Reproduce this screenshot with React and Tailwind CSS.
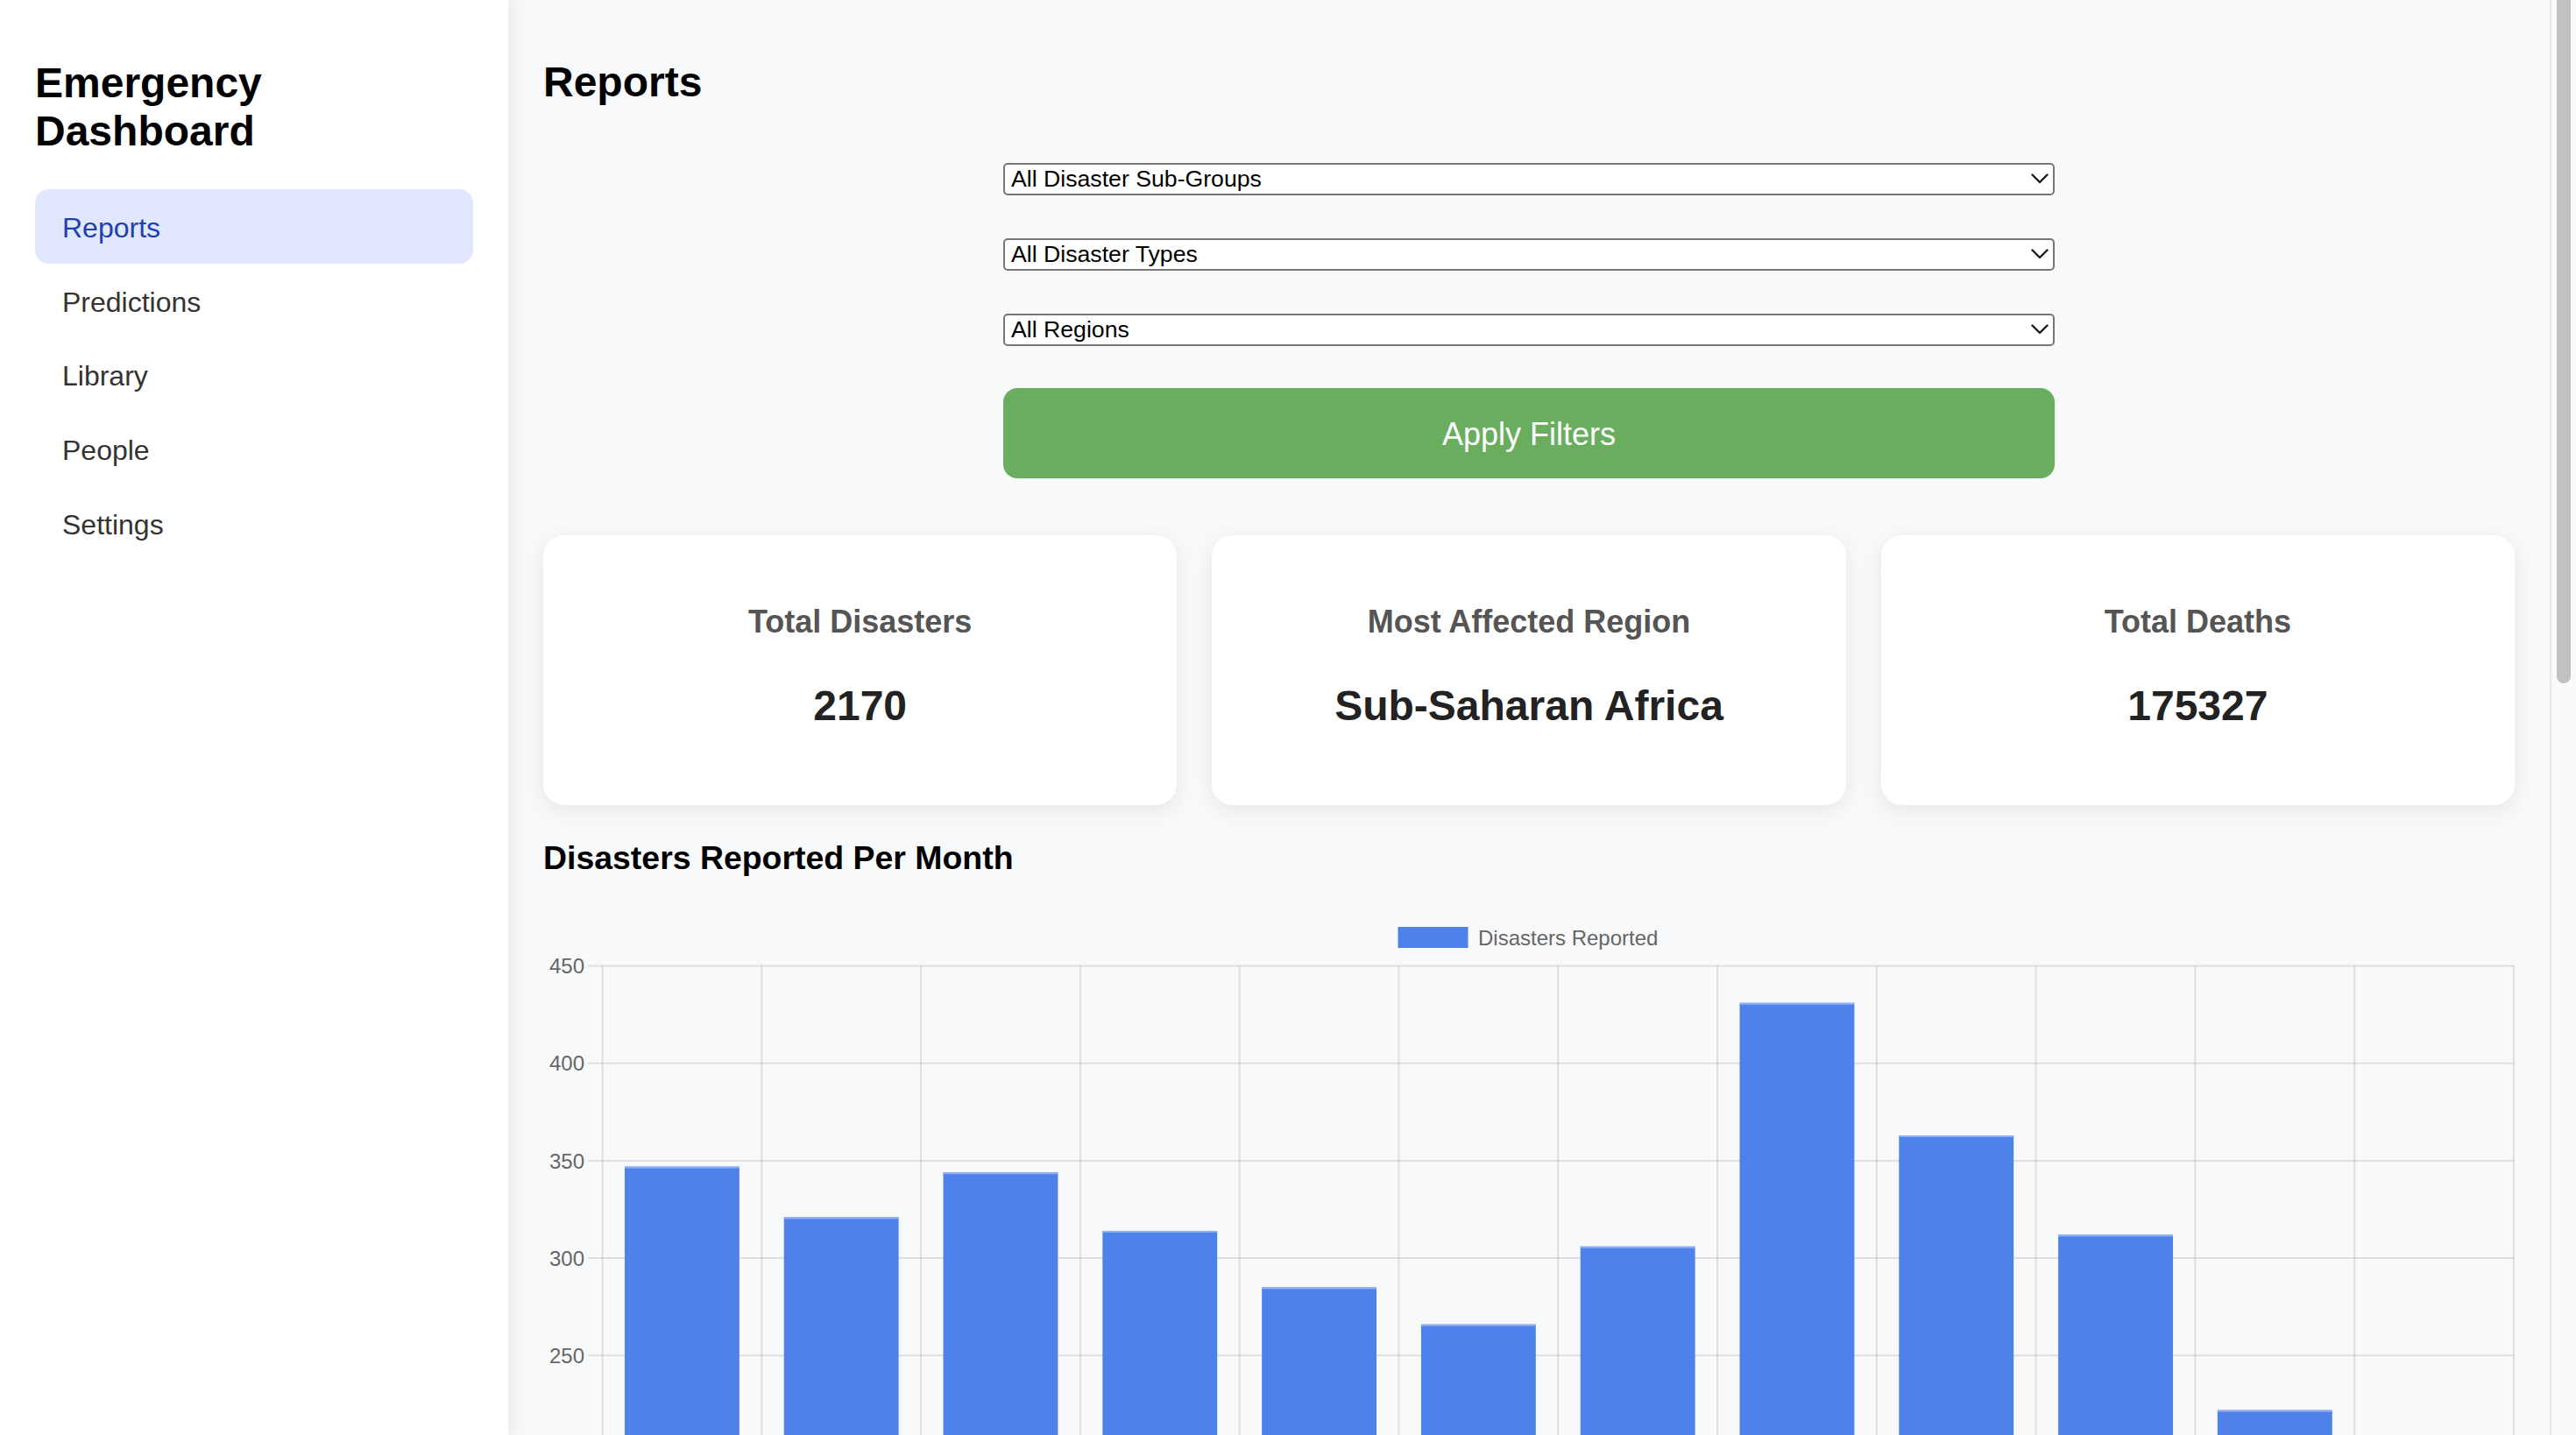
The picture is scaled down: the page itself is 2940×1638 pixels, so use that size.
import React from "react";

const navItems = ["Reports", "Predictions", "Library", "People", "Settings"];
const filters = ["All Disaster Sub-Groups", "All Disaster Types", "All Regions"];
const stats = [
  { label: "Total Disasters", value: "2170" },
  { label: "Most Affected Region", value: "Sub-Saharan Africa" },
  { label: "Total Deaths", value: "175327" },
];
const monthly = [347, 321, 344, 314, 285, 266, 306, 431, 363, 312, 222, 190];

function Chevron() {
  return (
    <svg width="20" height="12" viewBox="0 0 20 12" fill="none">
      <path d="M1.5 1.5 L10 10 L18.5 1.5" stroke="#1a1a1a" strokeWidth="2.4" strokeLinecap="round" strokeLinejoin="round" />
    </svg>
  );
}

function BarChart() {
  const left = 67.5;
  const right = 2249;
  const top = 62.5;
  const h = 600;
  const cw = (right - left) / 12;
  const y = (v) => top + (450 - v) * 2.224;
  const ticks = [450, 400, 350, 300, 250];

  return (
    <svg className="block w-full h-[600px]" viewBox="0 0 2250 600">
      {/* legend */}
      <rect x="975.5" y="18" width="80" height="24" fill="#4f81ea" />
      <text x="1067" y="38.5" fontSize="24" fill="#666" fontFamily="Liberation Sans, Arial, sans-serif">
        Disasters Reported
      </text>

      {/* horizontal grid + y labels */}
      {ticks.map((t) => (
        <g key={t}>
          <line x1="51" x2={right} y1={y(t)} y2={y(t)} stroke="rgba(0,0,0,0.1)" strokeWidth="2" />
          <text x="47" y={y(t) + 8.6} fontSize="24" fill="#666" textAnchor="end" fontFamily="Liberation Sans, Arial, sans-serif">
            {t}
          </text>
        </g>
      ))}

      {/* vertical grid */}
      {Array.from({ length: 13 }).map((_, i) => (
        <line key={i} x1={left + i * cw} x2={left + i * cw} y1={top} y2={h} stroke="rgba(0,0,0,0.1)" strokeWidth="2" />
      ))}

      {/* bars */}
      {monthly.map((v, i) => {
        const bw = cw * 0.72;
        const bx = left + i * cw + (cw - bw) / 2;
        return (
          <g key={i}>
            <rect x={bx} y={y(v)} width={bw} height={h - y(v)} fill="#4f81ea" />
            <rect x={bx} y={y(v)} width={bw} height="2" fill="#8fb0f3" />
          </g>
        );
      })}
    </svg>
  );
}

export default function App() {
  return (
    <div className="flex h-screen w-full overflow-hidden bg-[#f8f9fa] font-['Liberation_Sans',Arial,sans-serif]">
      <aside className="relative z-10 w-[580px] shrink-0 bg-white px-[40px] pt-[67px] shadow-[4px_0_20px_rgba(0,0,0,0.08)]">
        <h1 className="text-[48px] leading-[55px] font-bold text-black">Emergency Dashboard</h1>
        <nav className="mt-[39px] flex flex-col">
          {navItems.map((item, i) => (
            <div
              key={item}
              className={
                i === 0
                  ? "h-[84.8px] flex items-center pl-[31px] pt-[3px] rounded-[16px] bg-[#e0e7ff] text-[#1e40af] text-[32px]"
                  : "h-[84.8px] flex items-center pl-[31px] pt-[3px] rounded-[16px] text-[#333] text-[32px]"
              }
            >
              {item}
            </div>
          ))}
        </nav>
      </aside>

      <main className="flex-1 min-w-0 overflow-hidden px-[40px] pt-[66px]">
        <h2 className="text-[48px] leading-[55px] font-bold text-black">Reports</h2>

        <div className="mx-auto mt-[64.5px] flex w-[1200px] flex-col gap-[49px]">
          {filters.map((f) => (
            <div key={f} className="flex h-[37px] items-center justify-between rounded-[5px] border-2 border-[#767676] bg-white pl-[7px] pr-[5px] text-[26.67px] text-black">
              <span>{f}</span>
              <Chevron />
            </div>
          ))}
        </div>
        <button className="mx-auto mt-[48.5px] flex h-[103px] w-[1200px] items-center justify-center rounded-[16px] bg-[#69ae5e] pt-[3px] text-[36px] text-white">
          Apply Filters
        </button>

        <div className="mt-[65px] grid grid-cols-3 gap-[40px]">
          {stats.map((s) => (
            <div key={s.label} className="h-[308px] rounded-[24px] bg-white pt-[78px] text-center shadow-[0_6px_24px_rgba(0,0,0,0.08)]">
              <div className="text-[36px] leading-[41px] font-bold text-[#555]">{s.label}</div>
              <div className="mt-[48px] text-[48px] leading-[55px] font-bold text-[#222]">{s.value}</div>
            </div>
          ))}
        </div>

        <h3 className="mt-[38.5px] text-[37.44px] leading-[43px] font-bold text-black">Disasters Reported Per Month</h3>

        <div className="mt-[39.5px]">
          <BarChart />
        </div>
      </main>

      <div className="w-[30px] shrink-0 border-l-2 border-[#e6e6e6] bg-[#fafafa] pl-[6px]">
        <div className="h-[780px] w-[16px] rounded-b-[8px] bg-[#c1c1c1]" />
      </div>
    </div>
  );
}
